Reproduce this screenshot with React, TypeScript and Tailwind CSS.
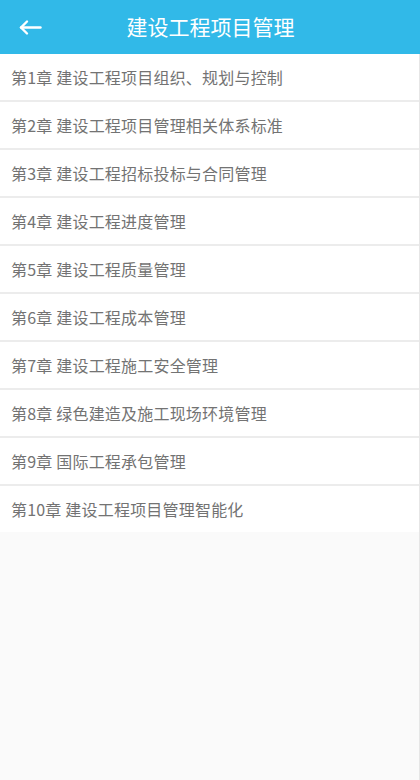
import React from "react";

const chapters = [
  "第1章 建设工程项目组织、规划与控制",
  "第2章 建设工程项目管理相关体系标准",
  "第3章 建设工程招标投标与合同管理",
  "第4章 建设工程进度管理",
  "第5章 建设工程质量管理",
  "第6章 建设工程成本管理",
  "第7章 建设工程施工安全管理",
  "第8章 绿色建造及施工现场环境管理",
  "第9章 国际工程承包管理",
  "第10章 建设工程项目管理智能化",
];

export default function App() {
  return (
    <div
      className="w-[420px] h-[780px] bg-[#fafafa] flex flex-col"
      style={{ fontFamily: '"Noto Sans CJK SC", "Noto Sans", sans-serif' }}
    >
      <div className="h-[54px] bg-[#31b9e8] flex items-center relative shrink-0">
        <div className="absolute left-[19px] top-[16px]">
          <svg width="23" height="23" viewBox="0 0 23 23" fill="none" stroke="white" strokeWidth="2.4" strokeLinecap="round" strokeLinejoin="round">
            <path d="M21.5 11.5H2" />
            <path d="M8 5.5L2 11.5L8 17.5" />
          </svg>
        </div>
        <div className="flex-1 text-center text-white text-[21px] pl-[1px]">建设工程项目管理</div>
      </div>
      <div className="flex-1 flex flex-col border-r border-[#e6e6e6]">
        {chapters.map((c, i) => (
          <div
            key={i}
            className={
              "bg-white flex items-center pl-[11px] text-[16px] text-[#737373] tracking-[0.2px] " +
              (i < chapters.length - 1 ? "h-[48px] border-b-2 border-[#ececec]" : "h-[46px]")
            }
          >
            {c}
          </div>
        ))}
      </div>
    </div>
  );
}
